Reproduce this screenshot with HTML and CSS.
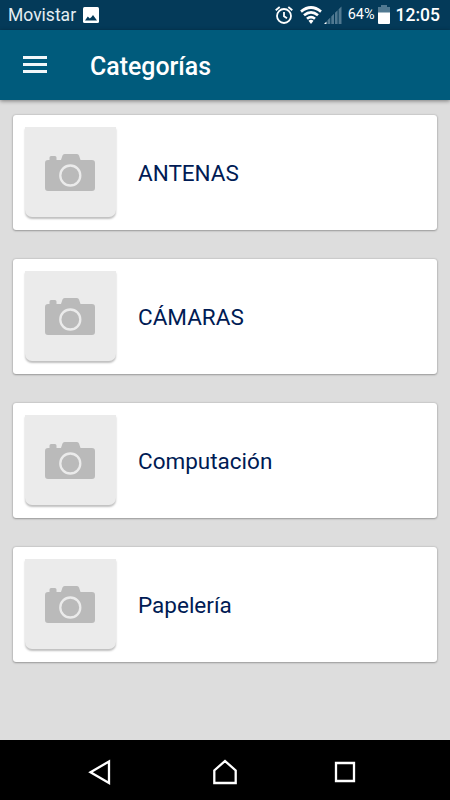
FILE: index.html
```html
<!DOCTYPE html>
<html lang="es">
<head>
  <meta charset="UTF-8">
  <title>Categorías</title>
  <link rel="stylesheet" href="styles.css">
</head>
<body>

  <svg class="defs" width="0" height="0">
    <symbol id="camera" viewBox="0 0 50 37">
      <path fill="#bababa" d="M3 6h1.500V3.500q0-1.500 1.500-1.500h4q1.500 0 1.500 1.500V6H16l1.500-4.500Q18 0 19.500 0h12.500q1.500 0 2 1.500L35.500 6H47q3 0 3 3v25q0 3-3 3H3q-3 0-3-3V9q0-3 3-3z"/>
      <circle cx="25.300" cy="21.500" r="10" fill="none" stroke="#ebebeb" stroke-width="2.300"/>
    </symbol>
  </svg>

  <div class="status-bar">
    <span class="carrier">Movistar</span>
    <svg class="picture" width="16" height="16" viewBox="0 0 16 16">
      <rect width="16" height="16" rx="1.500" fill="#fff"/>
      <path fill="#043a59" d="M2 13.500l2.800-4 2 2 1.700-1.500 1.500-2 4 5.500z"/>
    </svg>
    <div class="status-icons">
      <svg class="alarm" width="18" height="18" viewBox="0 0 18 18" fill="none" stroke="#fff" stroke-width="1.800">
        <circle cx="9" cy="10" r="7"/>
        <path d="M9 6v4.300l3 2M.7 4.300L4.700 1M17.300 4.300L13.300 1"/>
      </svg>
      <svg class="wifi" width="22" height="18" viewBox="0 0 22 18" fill="none" stroke="#fff" stroke-width="2.700">
        <path d="M1 5.600Q11-2.600 21 5.600M4 9.300Q11 3.500 18 9.300M7 12.800Q11 9.500 15 12.800"/>
        <path d="M8.500 14.700Q11 13 13.500 14.700L11 18z" fill="#fff" stroke="none"/>
      </svg>
      <svg class="signal" width="18" height="18" viewBox="0 0 18 18" fill="#517991">
        <path fill="#fff" d="M0 18l2.500-2.500V18z"/>
        <path d="M3.500 18v-3.700L6.300 11.500V18zM7.300 18v-7.500L10 7.800V18zM11 18V6.800L13.600 4.200V18zM14.600 18V3.200L17.500.5V18z"/>
      </svg>
      <span class="percent">64%</span>
      <svg class="battery" width="12" height="19" viewBox="0 0 12 19">
        <path fill="#517991" d="M0 2h3V0h6v2h3v6H0z"/>
        <path fill="#fff" d="M0 7.500h12V18q0 1-1 1H1q-1 0-1-1z"/>
      </svg>
      <span class="clock">12:05</span>
    </div>
  </div>

  <div class="app-bar">
    <div class="menu">
      <span></span>
      <span></span>
      <span></span>
    </div>
    <h1>Categorías</h1>
  </div>

  <div class="list">
    <div class="card">
      <div class="thumb"><svg><use href="#camera"/></svg></div>
      <span class="name">ANTENAS</span>
    </div>
    <div class="card">
      <div class="thumb"><svg><use href="#camera"/></svg></div>
      <span class="name">CÁMARAS</span>
    </div>
    <div class="card">
      <div class="thumb"><svg><use href="#camera"/></svg></div>
      <span class="name">Computación</span>
    </div>
    <div class="card">
      <div class="thumb"><svg><use href="#camera"/></svg></div>
      <span class="name">Papelería</span>
    </div>
  </div>

  <div class="nav-bar">
    <svg width="24" height="26" viewBox="0 0 24 26"><path d="M21 2.500v21.500L2.500 13.200z"/></svg>
    <svg class="home" width="26" height="26" viewBox="0 0 26 26"><path d="M2.300 24V11.500L13 2l10.700 9.500V24z"/></svg>
    <svg width="22" height="22" viewBox="0 0 22 22"><path d="M2 2h18v18H2z"/></svg>
  </div>

</body>
</html>
```

FILE: styles.css
```css
body {
  margin: 0;
  height: 800px;
  display: flex;
  flex-direction: column;
  overflow: hidden;
  background: #ddd;
  font-family: Roboto, sans-serif;
}
.defs {
  position: absolute;
}
.status-bar {
  display: flex;
  align-items: center;
  height: 30px;
  padding: 0 10px 0 8px;
  box-sizing: border-box;
  background: #043a59;
  color: #fff;
}
.carrier {
  font-size: 17.500px;
  line-height: 34px;
  color: #e4edf2;
}
.picture {
  margin-left: 7px;
}
.status-icons {
  display: flex;
  align-items: center;
  margin-left: auto;
}
.wifi {
  margin-left: 7px;
}
.signal {
  margin-left: 2px;
}
.percent {
  margin-left: 6px;
  font-size: 14.500px;
  line-height: 34px;
}
.battery {
  margin-left: 3px;
  margin-bottom: 1px;
}
.clock {
  margin-left: 6px;
  font-size: 17.500px;
  font-weight: 500;
  line-height: 34px;
}
.app-bar {
  display: flex;
  align-items: center;
  height: 70px;
  padding: 0 23px;
  box-sizing: border-box;
  background: #005b7c;
  box-shadow: 0 1px 4px rgba(0,0,0,0.45);
}
.menu {
  display: flex;
  flex-direction: column;
  gap: 4px;
  width: 24px;
  margin-bottom: 1px;
}
.menu span {
  height: 3px;
  background: #f2f7f9;
}
h1 {
  margin: 2px 0 0 43px;
  font-size: 24.900px;
  font-weight: 500;
  color: #fff;
}
.list {
  flex: 1;
  display: flex;
  flex-direction: column;
  gap: 29px;
  padding: 14.500px 13px 0;
}
.card {
  display: flex;
  align-items: center;
  height: 115px;
  padding-left: 12px;
  background: #fff;
  border-radius: 3px;
  box-shadow: 0 0 2px rgba(0,0,0,0.25), 0 1px 2px rgba(0,0,0,0.25);
}
.thumb {
  display: flex;
  align-items: center;
  justify-content: center;
  width: 91px;
  height: 90px;
  background: #ebebeb;
  border-radius: 0 0 7px 7px;
  box-shadow: 0 2px 2px rgba(0,0,0,0.25);
}
.thumb svg {
  width: 50px;
  height: 37px;
  margin: 1px 1px 0 0;
}
.name {
  margin: 1px 0 0 22px;
  font-size: 22.500px;
  color: #001b54;
}
.nav-bar {
  display: flex;
  align-items: center;
  justify-content: space-between;
  height: 60px;
  padding: 3px 94px 0 88px;
  box-sizing: border-box;
  background: #000;
}
.nav-bar .home {
  margin-left: 4px;
}
.nav-bar path {
  fill: none;
  stroke: #fff;
  stroke-width: 2.300;
}
```
